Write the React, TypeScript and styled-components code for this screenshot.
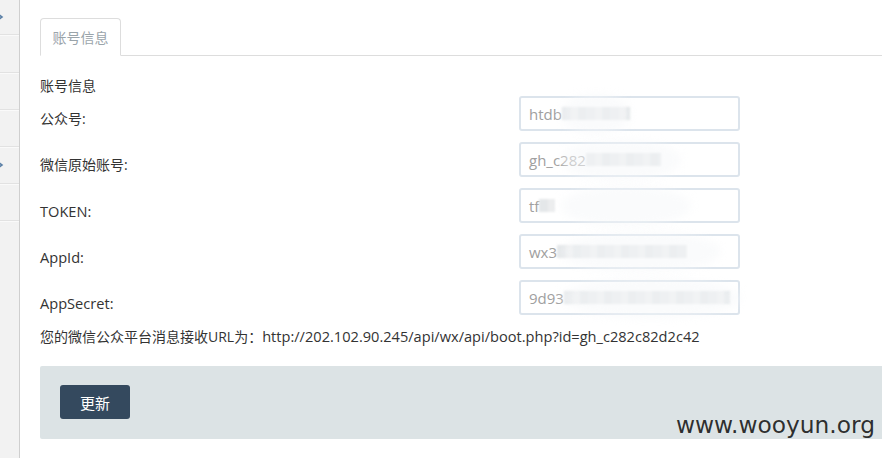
import React from "react";
import styled, { createGlobalStyle } from "styled-components";

const Global = createGlobalStyle`
  html, body { margin: 0; padding: 0; background: #fff; }
  body { font-family: "Open Sans", "Noto Sans CJK SC", sans-serif; color: #333; }
  * { box-sizing: border-box; }
`;

const Page = styled.div`
  position: relative;
  display: flex;
  width: 882px;
  height: 458px;
  overflow: hidden;
`;

const Sidebar = styled.div`
  width: 20px;
  flex: none;
  background: #f2f2f2;
  border-right: 1px solid #cfcfcf;
  display: flex;
  flex-direction: column;
`;

const SideItem = styled.div<{ $h: number }>`
  height: ${(p) => p.$h}px;
  flex: none;
  display: flex;
  align-items: center;
  border-bottom: 1px solid #e2e2e2;
  box-shadow: 0 1px 0 #fafafa;
`;

const Main = styled.div`
  flex: 1;
  padding: 18px 0 0 20px;
  display: flex;
  flex-direction: column;
`;

const TabBar = styled.div`
  display: flex;
  height: 38px;
  border-bottom: 1px solid #dddddd;
`;

const Tab = styled.div`
  width: 81px;
  height: 38px;
  border: 1px solid #dddddd;
  border-bottom-color: #fff;
  border-radius: 4px 4px 0 0;
  background: #fff;
  display: flex;
  align-items: center;
  justify-content: center;
  font-size: 14px;
  color: #9aa4aa;
`;

const Heading = styled.div`
  font-size: 14px;
  line-height: 20px;
  margin-top: 20px;
  color: #333;
`;

const Form = styled.div`
  display: flex;
  flex-direction: column;
`;

const Row = styled.div`
  display: grid;
  grid-template-columns: 479px 221px;
  height: 46px;
`;

const Label = styled.div`
  font-size: 14px;
  line-height: 20px;
  padding-top: 13px;
  color: #333;
`;

const Latin = styled.span`
  font-size: 14.6px;
`;

const Field = styled.div`
  position: relative;
  height: 35px;
  border: 2px solid #dce4ec;
  border-radius: 3px;
  display: flex;
  align-items: center;
  padding-left: 8px;
  font-size: 15px;
  color: #a0a0a0;
  white-space: nowrap;
  overflow: visible;
`;

const Mosaic = styled.span<{ $w: number }>`
  display: inline-block;
  width: ${(p) => p.$w}px;
  height: 13px;
  background: repeating-linear-gradient(
    90deg,
    #e4e7e9 0 9px,
    #ecedee 9px 16px,
    #dfe3e5 16px 24px
  );
  filter: blur(1px);
`;

const Smear = styled.span<{ $w: number }>`
  position: absolute;
  left: 40px;
  top: -4px;
  width: ${(p) => p.$w}px;
  height: 40px;
  border-radius: 50%;
  background: rgba(246, 248, 250, 0.55);
  filter: blur(4px);
  pointer-events: none;
`;

const UrlLine = styled.div`
  font-size: 14px;
  line-height: 20px;
  color: #333;
`;

const Panel = styled.div`
  margin-top: 19px;
  height: 73px;
  background: #dce3e5;
  border-radius: 2px 0 0 2px;
  padding: 19px 20px;
`;

const Button = styled.button`
  width: 70px;
  height: 34px;
  border: none;
  border-radius: 3px;
  background: #34495e;
  color: #fff;
  font-family: "Noto Sans CJK SC", sans-serif;
  font-size: 15px;
  padding: 0;
`;

const Watermark = styled.div`
  position: absolute;
  left: 676px;
  top: 411px;
  font-family: "DejaVu Sans", sans-serif;
  font-size: 23.3px;
  color: rgba(35, 35, 35, 0.95);
  pointer-events: none;
`;

const Chevron = () => (
  <svg width="4" height="8" viewBox="0 0 4 8">
    <path d="M-2 1 L2 4 L-2 7" stroke="#5a7fa6" strokeWidth="1.6" fill="none" />
  </svg>
);

const sideRows = [
  { h: 35, arrow: true },
  { h: 38, arrow: false },
  { h: 37, arrow: false },
  { h: 37, arrow: false },
  { h: 37, arrow: true },
  { h: 37, arrow: false },
];

const fields = [
  { label: "公众号:", latin: false, value: "htdb", mosaic: 68, smear: 70 },
  { label: "微信原始账号:", latin: false, value: "gh_c282", mosaic: 75, smear: 120 },
  { label: "TOKEN:", latin: true, value: "tf", mosaic: 16, smear: 130 },
  { label: "AppId:", latin: true, value: "wx3", mosaic: 130, smear: 160 },
  { label: "AppSecret:", latin: true, value: "9d93", mosaic: 166, smear: 180 },
];

export default function App() {
  return (
    <Page>
      <Global />
      <Sidebar>
        {sideRows.map((r, i) => (
          <SideItem key={i} $h={r.h}>
            {r.arrow && <Chevron />}
          </SideItem>
        ))}
      </Sidebar>
      <Main>
        <TabBar>
          <Tab>账号信息</Tab>
        </TabBar>
        <Heading>账号信息</Heading>
        <Form>
          {fields.map((f) => (
            <Row key={f.label}>
              <Label>{f.latin ? <Latin>{f.label}</Latin> : f.label}</Label>
              <Field>
                {f.value}
                <Mosaic $w={f.mosaic} />
                <Smear $w={f.smear} />
              </Field>
            </Row>
          ))}
        </Form>
        <UrlLine>
          您的微信公众平台消息接收URL为：
          <Latin>http://202.102.90.245/api/wx/api/boot.php?id=gh_c282c82d2c42</Latin>
        </UrlLine>
        <Panel>
          <Button>更新</Button>
        </Panel>
      </Main>
      <Watermark>www.wooyun.org</Watermark>
    </Page>
  );
}
